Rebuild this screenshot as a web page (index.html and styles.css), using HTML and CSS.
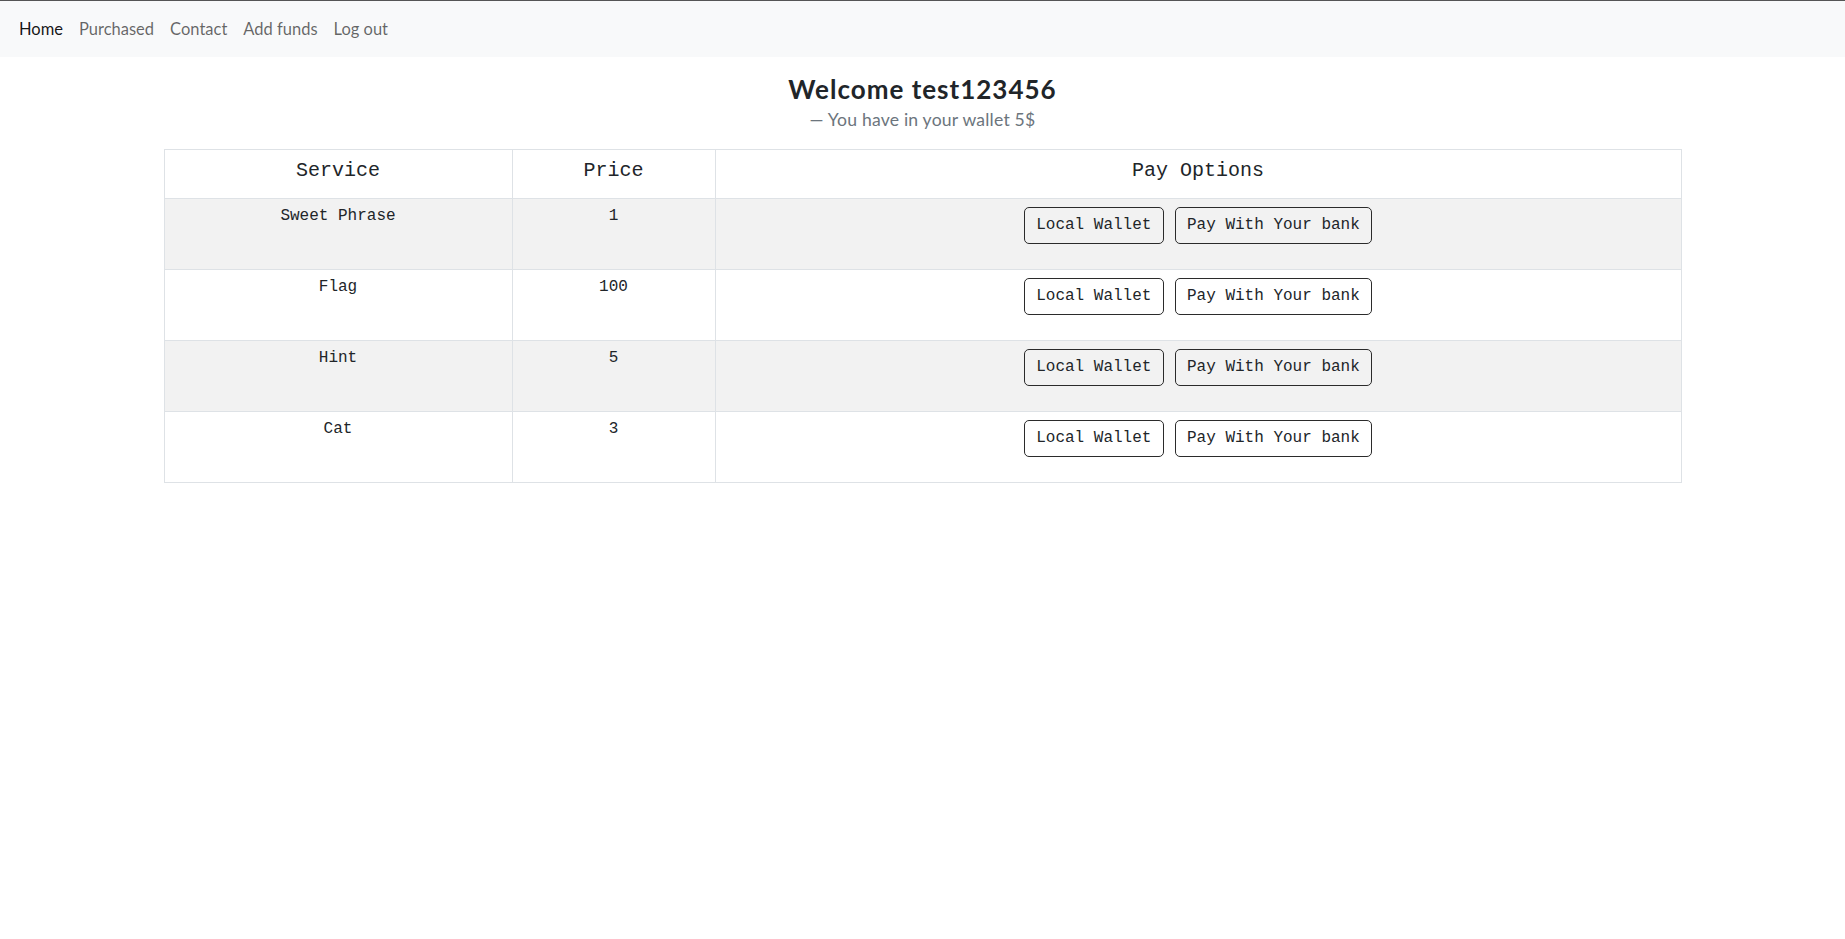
FILE: index.html
```html
<!DOCTYPE html>
<html lang="en">
<head>
<meta charset="utf-8">
<title>Home</title>
<link rel="stylesheet" href="styles.css">
</head>
<body>
<nav class="navbar">
  <a class="nav-link active" href="#">Home</a>
  <a class="nav-link" href="#">Purchased</a>
  <a class="nav-link" href="#">Contact</a>
  <a class="nav-link" href="#">Add funds</a>
  <a class="nav-link" href="#">Log out</a>
</nav>
<main class="main">
  <header class="welcome">
    <h3 class="title">Welcome test123456</h3>
    <p class="subtitle">— You have in your wallet 5$</p>
  </header>
  <table class="services">
    <colgroup><col class="col-service"><col class="col-price"><col class="col-pay"></colgroup>
    <thead>
      <tr><th>Service</th><th>Price</th><th>Pay Options</th></tr>
    </thead>
    <tbody>
      <tr class="odd"><td>Sweet Phrase</td><td>1</td><td><div class="btns"><button class="btn">Local Wallet</button><button class="btn">Pay With Your bank</button></div></td></tr>
      <tr><td>Flag</td><td>100</td><td><div class="btns"><button class="btn">Local Wallet</button><button class="btn">Pay With Your bank</button></div></td></tr>
      <tr class="odd"><td>Hint</td><td>5</td><td><div class="btns"><button class="btn">Local Wallet</button><button class="btn">Pay With Your bank</button></div></td></tr>
      <tr><td>Cat</td><td>3</td><td><div class="btns"><button class="btn">Local Wallet</button><button class="btn">Pay With Your bank</button></div></td></tr>
    </tbody>
  </table>
</main>
</body>
</html>
```
FILE: styles.css
```css
html, body { margin: 0; padding: 0; background: #fff; }
body {
  border-top: 1px solid #555;
  font-family: Lato, "Noto Sans", sans-serif;
  color: #212529;
}
.navbar {
  display: flex;
  align-items: center;
  height: 56px;
  padding: 0 11px;
  background: #f8f9fa;
}
.nav-link {
  padding: 0 8px;
  font-size: 16.5px;
  line-height: 20px;
  color: rgba(0,0,0,0.6);
  text-decoration: none;
}
.nav-link.active { color: rgba(0,0,0,0.92); }
.main { padding-top: 14.5px; }
.welcome { text-align: center; }
.title {
  margin: 0;
  font-size: 26px;
  line-height: 34px;
  letter-spacing: 1px;
  font-weight: 700;
  color: #212529;
}
.subtitle {
  margin: 2px 0 0;
  font-size: 17.6px;
  line-height: 24px;
  letter-spacing: 0.2px;
  color: #6c757d;
}
.services {
  margin: 17.5px auto 0;
  width: 1518px;
  border-collapse: collapse;
  table-layout: fixed;
  font-family: "Liberation Mono", monospace;
  color: #212529;
}
.col-service { width: 348px; }
.col-price { width: 203px; }
.services th, .services td {
  border: 1px solid #dee2e6;
  text-align: center;
  vertical-align: top;
}
.services th {
  font-weight: 400;
  font-size: 20px;
  line-height: 23px;
  padding: 8.5px 8px 16.5px;
}
.services td {
  font-size: 16px;
  line-height: 18px;
  padding: 8px 8px 25px;
}
.services tr.odd td { background: #f2f2f2; }
.btns {
  display: flex;
  justify-content: center;
  gap: 11px;
}
.btn {
  font-family: "Liberation Mono", monospace;
  font-size: 16px;
  line-height: 19px;
  padding: 8px 11.3px;
  border: 1px solid #2b2b2b;
  border-radius: 5px;
  background: transparent;
  color: #212529;
}
```
